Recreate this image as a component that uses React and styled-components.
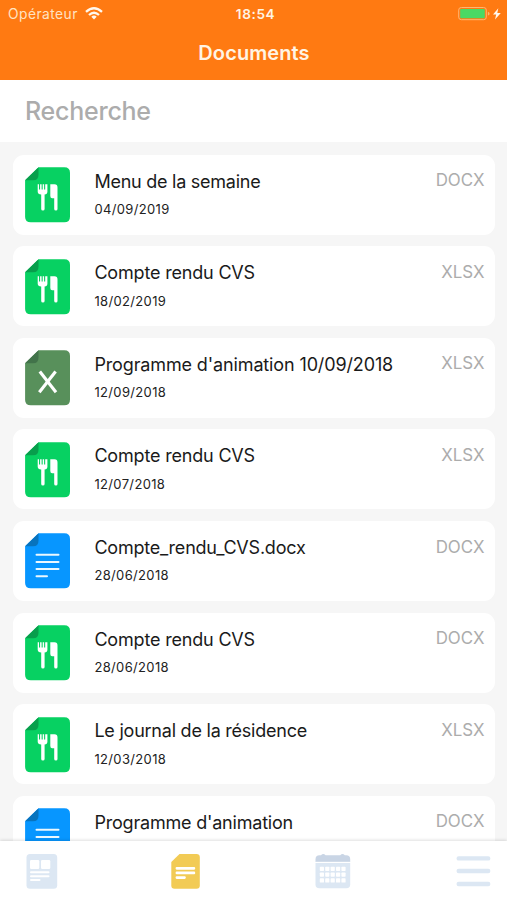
import React from "react";
import styled, { createGlobalStyle } from "styled-components";

const GlobalStyle = createGlobalStyle`
  * {
    box-sizing: border-box;
  }

  body {
    margin: 0;
    background: #f6f6f6;
    font-family: Inter, "Liberation Sans", sans-serif;
  }
`;

const Screen = styled.div`
  display: flex;
  flex-direction: column;
  height: 900px;
  overflow: hidden;
  background: #f6f6f6;
`;

const Header = styled.header`
  flex: none;
  height: 80px;
  background: #ff7a12;
  color: #fff4e4;
`;

const StatusBar = styled.div`
  display: grid;
  grid-template-columns: 1fr auto 1fr;
  align-items: center;
  height: 27px;
  padding: 0 5px 0 8px;
`;

const Carrier = styled.div`
  display: flex;
  align-items: center;
  gap: 7px;
  font-size: 13.8px;
  line-height: 16px;
  letter-spacing: 0.45px;
  color: #ffe3c2;
`;

const Clock = styled.div`
  padding-left: 1px;
  font-size: 13.6px;
  font-weight: 600;
  line-height: 16px;
  letter-spacing: 0.6px;
`;

const Battery = styled.div`
  display: flex;
  justify-content: flex-end;
`;

const PageTitle = styled.h1`
  margin: 14px 0 0;
  padding-left: 1px;
  font-size: 20px;
  font-weight: 600;
  line-height: 25px;
  letter-spacing: 0.1px;
  text-align: center;
`;

const SearchBar = styled.div`
  flex: none;
  height: 62px;
  padding: 16px 25px 0;
  background: #fff;
  color: #acacac;
  font-size: 25px;
  font-weight: 500;
  line-height: 31px;
  letter-spacing: -0.25px;
`;

const List = styled.main`
  flex: 1;
  min-height: 0;
  display: flex;
  flex-direction: column;
  gap: 11.6px;
  padding: 12.6px 12px 0 13px;
  overflow: hidden;
`;

const Card = styled.article`
  flex: none;
  display: flex;
  align-items: flex-start;
  height: 80px;
  padding: 12.4px 10.5px 0 12px;
  border-radius: 11px;
  background: #fff;
`;

const Infos = styled.div`
  flex: 1;
  padding: 2.6px 0 0 23.9px;
`;

const Name = styled.div`
  color: #1a1a1a;
  font-size: 18px;
  line-height: 24px;
  letter-spacing: ${(props) => props.$tracking}px;
  white-space: nowrap;
`;

const DateText = styled.div`
  margin-top: 7.5px;
  color: #222;
  font-size: 13px;
  line-height: 17px;
  letter-spacing: 0.35px;
`;

const Extension = styled.div`
  padding-top: 2.3px;
  color: #acacac;
  font-size: 16.9px;
  line-height: 22px;
`;

const TabBar = styled.nav`
  flex: none;
  display: grid;
  grid-template-columns: 144.5px 144.5px 1fr auto;
  align-items: start;
  height: 59px;
  padding: 12px 16px 0 26px;
  background: #fff;
  box-shadow: 0 -1px 3px rgba(0, 0, 0, 0.13);
  z-index: 1;
`;

const FileSvg = styled.svg`
  flex: none;
  display: block;
`;

const fileColors = {
  menu: { page: "#07d162", fold: "#089e4c" },
  excel: { page: "#58905b", fold: "#42734a" },
  word: { page: "#0796ff", fold: "#0873bd" },
};

const FileIcon = ({ type }) => {
  const { page, fold } = fileColors[type];
  return (
    <FileSvg width="45.5" height="56" viewBox="0 0 45.5 56">
      <path
        d="M13.5 0.3H39.3Q45 0.3 45 5.8V49.8Q45 55.3 39.3 55.3H5.8Q0.1 55.3 0.1 49.8V13.3Z"
        fill={page}
      />
      <path d="M13.5 0.3V7.8Q13.5 13.3 8 13.3H0.1Z" fill={fold} />
      {type === "menu" && (
        <g fill="#fff">
          <path d="M12.7 17.2H14V22.5H15.1V17.2H16.6V22.5H17.7V17.2H19.1V22.5H20.2V17.2H22.4V24.8Q22.4 27.2 19.6 27.6V42Q19.6 43.6 17.9 43.6Q16.2 43.6 16.2 42V27.6Q12.7 27.2 12.7 24.8Z" />
          <path d="M25.3 17.2H29.5Q32.5 17.2 32.5 20.5V42Q32.5 43.6 30.9 43.6Q29.2 43.6 29.2 42V31.3H27.2Q25.3 31.3 25.3 29Z" />
        </g>
      )}
      {type === "excel" && (
        <g stroke="#fff" strokeWidth="3.1" fill="none">
          <path d="M14.8 21.5L31 42.3" />
          <path d="M30.6 21.5L14.3 42.3" />
        </g>
      )}
      {type === "word" && (
        <g stroke="#eaf8ff" strokeWidth="2" strokeLinecap="round">
          <path d="M11.5 21.7H33.5M11.5 29H33.5M11.5 36.1H33.5M11.5 43.3H22" />
        </g>
      )}
    </FileSvg>
  );
};

const WifiIcon = () => (
  <svg width="18" height="13" viewBox="0 0 18 13" fill="none" stroke="#fff8ee" strokeWidth="2.3">
    <path d="M1 4.8Q9 -2.2 17 4.8" />
    <path d="M4 8Q9 3.6 14 8" />
    <path d="M6.3 9.7Q9 7.4 11.7 9.7L9 12.6Z" fill="#fff8ee" stroke="none" />
  </svg>
);

const BatteryIcon = () => (
  <svg width="44" height="14" viewBox="0 0 44 14">
    <rect x="0.7" y="0.5" width="27.6" height="12.2" rx="2.6" fill="none" stroke="#ffb672" />
    <rect x="2.2" y="2" width="24.6" height="9.2" rx="1" fill="#4bd964" />
    <path d="M29.9 4.8Q31.6 5.4 31.6 6.7T29.9 8.6Z" fill="#ffb672" />
    <path d="M40.3 1.2L35 7.6H38.2L37 12.6L42.8 5.9H39.3Z" fill="#fff8ee" />
  </svg>
);

const HomeIcon = () => (
  <svg width="32" height="36" viewBox="0 0 32 36">
    <rect x="0.5" y="1" width="30.7" height="34.8" rx="3.5" fill="#dce7f3" />
    <g fill="#fff">
      <rect x="4" y="7" width="9.3" height="9" rx="1.3" />
      <rect x="15" y="7" width="9.3" height="9" rx="1.3" />
      <rect x="4" y="18.3" width="19.5" height="2" rx="1" />
      <rect x="4" y="22.2" width="19.5" height="2" rx="1" />
      <rect x="4" y="25.9" width="10.5" height="2" rx="1" />
    </g>
  </svg>
);

const DocumentsIcon = () => (
  <svg width="29" height="36" viewBox="0 0 29 36">
    <path
      d="M8.5 1H25.5Q28.8 1 28.8 4.3V32.5Q28.8 35.8 25.5 35.8H3.6Q0.3 35.8 0.3 32.5V9Z"
      fill="#f2cb55"
    />
    <g fill="#fff">
      <rect x="4.6" y="14" width="19.6" height="2.7" rx="1.1" />
      <rect x="4.6" y="18.6" width="19.6" height="2.7" rx="1.1" />
      <rect x="4.6" y="23.2" width="10.2" height="2.7" rx="1.1" />
    </g>
  </svg>
);

const CalendarIcon = () => (
  <svg width="36" height="36" viewBox="0 0 36 36">
    <path d="M0.5 10H35.2V31.5Q35.2 35.3 31.4 35.3H4.3Q0.5 35.3 0.5 31.5Z" fill="#dce7f3" />
    <path
      d="M0.5 9V6.3Q0.5 2.2 4.5 2.2H6Q8.2 0 10.6 2.2H25.2Q27.5 0 29.8 2.2H31.2Q35.2 2.2 35.2 6.3V9Z"
      fill="#c9d5e5"
    />
    <path d="M0.5 9.3H35.2" stroke="#fff" strokeWidth="1" />
    <g fill="#fff">
      {[13.7, 19.5, 25.3].map((y) =>
        [4.8, 10.2, 15.6, 21, 26.4].map((x) => (
          <rect key={`${x}-${y}`} x={x} y={y} width="4.2" height="4.3" rx="0.7" />
        ))
      )}
    </g>
  </svg>
);

const MenuIcon = () => (
  <svg width="35" height="36" viewBox="0 0 35 36">
    <path
      d="M2.7 5.4H32.2M2.7 18H32.2M2.7 31H32.2"
      stroke="#dce7f3"
      strokeWidth="4.4"
      strokeLinecap="round"
    />
  </svg>
);

const documents = [
  { name: "Menu de la semaine", date: "04/09/2019", ext: "DOCX", type: "menu", tracking: -0.25 },
  { name: "Compte rendu CVS", date: "18/02/2019", ext: "XLSX", type: "menu", tracking: -0.18 },
  {
    name: "Programme d'animation 10/09/2018",
    date: "12/09/2018",
    ext: "XLSX",
    type: "excel",
    tracking: -0.13,
  },
  { name: "Compte rendu CVS", date: "12/07/2018", ext: "XLSX", type: "menu", tracking: -0.18 },
  { name: "Compte_rendu_CVS.docx", date: "28/06/2018", ext: "DOCX", type: "word", tracking: -0.22 },
  { name: "Compte rendu CVS", date: "28/06/2018", ext: "DOCX", type: "menu", tracking: -0.18 },
  {
    name: "Le journal de la résidence",
    date: "12/03/2018",
    ext: "XLSX",
    type: "menu",
    tracking: -0.23,
  },
  { name: "Programme d'animation", ext: "DOCX", type: "word", tracking: -0.2 },
];

const App = () => {
  return (
    <Screen>
      <GlobalStyle />
      <Header>
        <StatusBar>
          <Carrier>
            Opérateur
            <WifiIcon />
          </Carrier>
          <Clock>18:54</Clock>
          <Battery>
            <BatteryIcon />
          </Battery>
        </StatusBar>
        <PageTitle>Documents</PageTitle>
      </Header>
      <SearchBar>Recherche</SearchBar>
      <List>
        {documents.map((doc, index) => (
          <Card key={index}>
            <FileIcon type={doc.type} />
            <Infos>
              <Name $tracking={doc.tracking}>{doc.name}</Name>
              {doc.date && <DateText>{doc.date}</DateText>}
            </Infos>
            <Extension>{doc.ext}</Extension>
          </Card>
        ))}
      </List>
      <TabBar>
        <HomeIcon />
        <DocumentsIcon />
        <CalendarIcon />
        <MenuIcon />
      </TabBar>
    </Screen>
  );
};

export default App;
